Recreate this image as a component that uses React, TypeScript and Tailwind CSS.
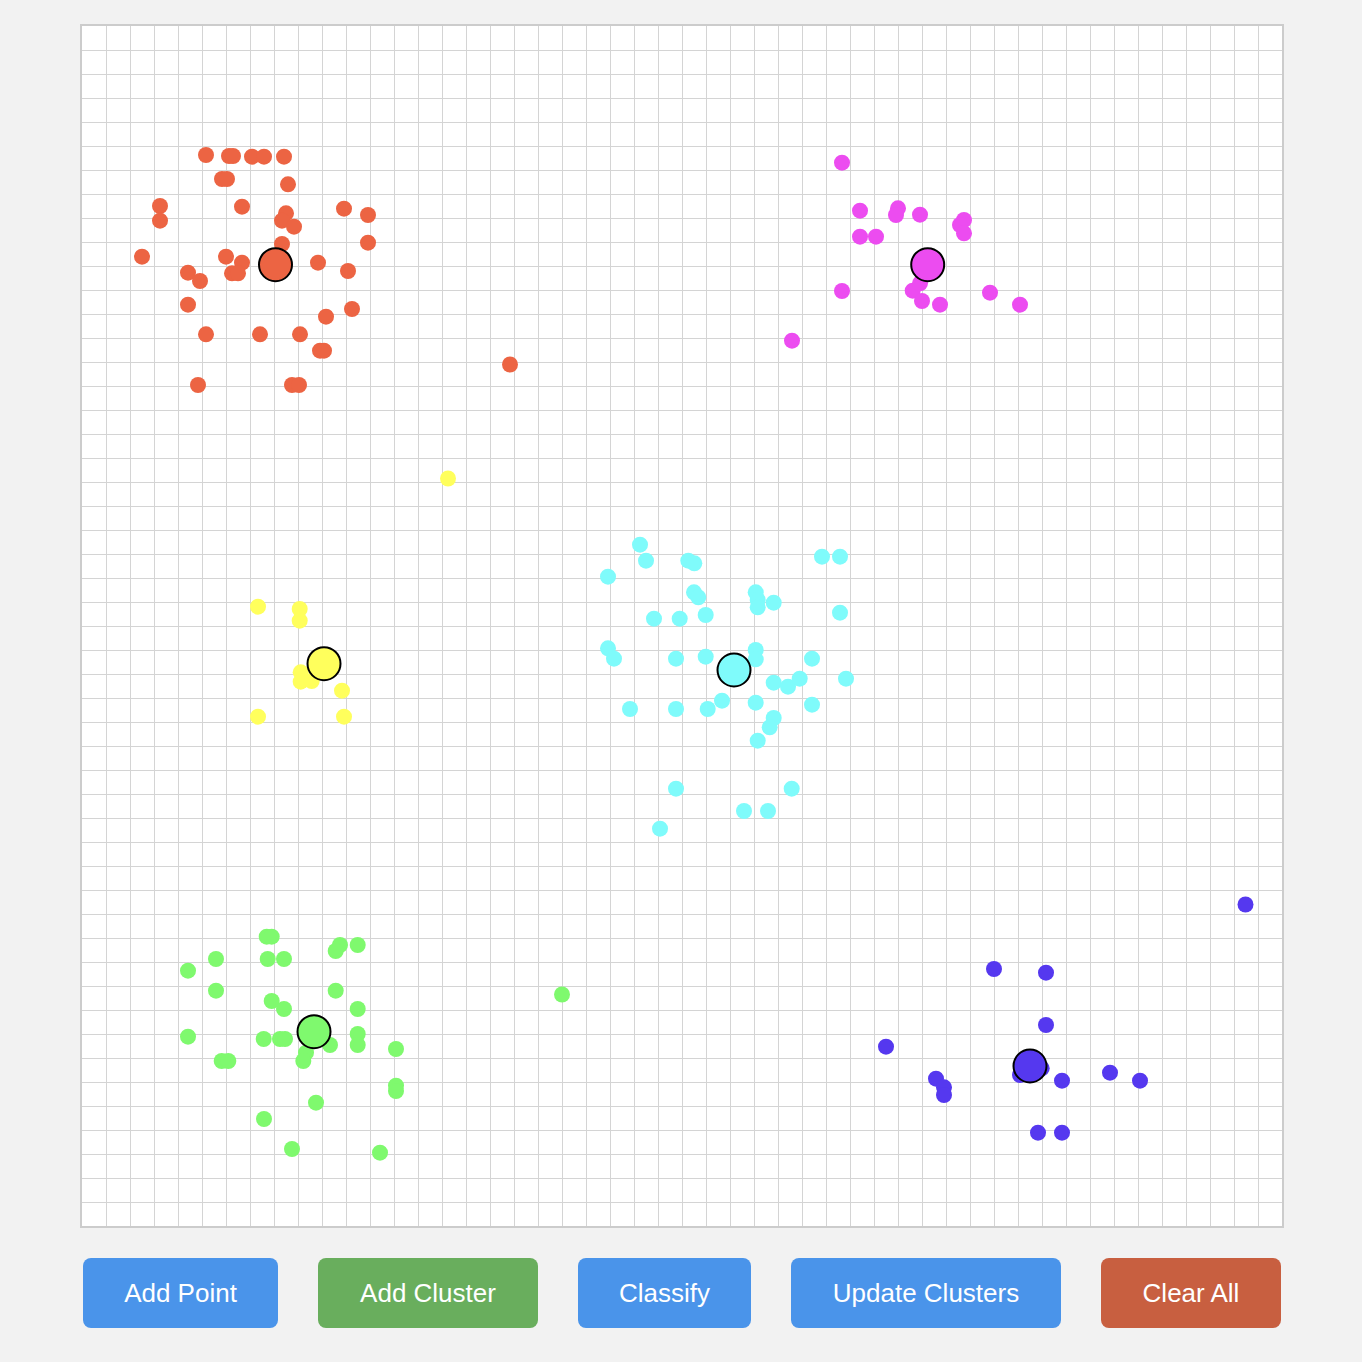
import React from "react";

type P = [number, number];

const orange: P[] = [
  [206,155],[229,156],[233,156],[252,156.7],[264,156.7],[284,156.7],[222,179],[227,179],[288,184.3],
  [160,206],[160,220.7],[242,206.7],[344,208.7],[368,215],[286,213.3],[282,220.7],[294,226.7],[368,242.7],
  [282,244],[142,256.7],[226,256.7],[242,262.7],[232,273.3],[238,273.3],[188,272.7],[200,281],[318,262.7],
  [348,271],[188,304.7],[352,309],[326,316.7],[206,334.3],[260,334.3],[300,334.3],[320,350.7],[324,350.7],
  [198,385],[292,385],[299,385],[510,364.5],
];
const magenta: P[] = [
  [842,162.7],[860,210.7],[898,208.3],[896,215],[920,214.7],[964,220],[960,225],[964,233.3],[860,236.7],
  [876,236.7],[842,291],[912.7,290.7],[920,283.3],[922,301],[940,304.7],[990,292.7],[1020,304.7],[792,340.7],
];
const yellow: P[] = [
  [258,606.7],[299.7,609],[299.7,620.7],[300.7,672.3],[300.7,681.7],[311.7,681],[342,690.7],[258,716.7],
  [344,716.7],[448,478.5],
];
const cyan: P[] = [
  [640,544.7],[646,560.7],[688.3,560.7],[694.3,563.3],[608,576.7],[822,556.7],[840,556.7],[694,592.3],
  [698.3,597.3],[755.7,592.3],[757.7,600],[757.7,607.3],[773.7,602.7],[840,612.7],[654,618.7],[679.7,618.7],
  [705.7,615],[608,648.3],[614,658.7],[676,658.7],[705.7,656.7],[755.7,650],[755.7,659.3],[812,658.7],
  [773.7,682.7],[788,686.7],[799.7,678.7],[846,678.7],[630,709],[676,709],[707.7,709],[722,700.7],
  [755.7,702.7],[812,704.7],[773.7,718],[769.7,727.3],[757.7,740.7],[676,788.7],[791.7,788.7],[744,811],
  [768,811],[660,828.7],
];
const green: P[] = [
  [266.7,936.7],[271.7,936.7],[340,945],[335.7,951],[357.7,945],[216,959],[267.7,959],[284,959],[188,970.7],
  [216,990.7],[335.7,990.7],[271.7,1001],[284,1009],[357.7,1009],[188,1036.7],[263.7,1039],[280,1039],
  [285,1039],[330,1045],[357.7,1034],[357.7,1045],[306,1052.7],[303.3,1061],[221.7,1061],[228.3,1061],
  [396,1049],[396,1085.7],[396,1091],[316,1102.7],[264,1119],[292,1149],[380,1152.7],[562,994.5],
];
const blue: P[] = [
  [994,969],[1046,972.7],[1046,1025],[886,1046.7],[1020,1075],[1041.7,1068.3],[936,1078.7],[944,1087.3],
  [944,1095],[1062,1080.7],[1110,1072.7],[1140,1080.7],[1038,1132.7],[1062,1132.7],[1245.5,904.5],
];

const clusters: { color: string; pts: P[]; c: P }[] = [
  { color: "#ec6443", pts: orange, c: [275.5, 264.7] },
  { color: "#ec4cf0", pts: magenta, c: [927.7, 264.7] },
  { color: "#ffff5c", pts: yellow, c: [324, 663.7] },
  { color: "#7ffbfb", pts: cyan, c: [734, 670] },
  { color: "#7ff96e", pts: green, c: [314, 1031.7] },
  { color: "#5538ef", pts: blue, c: [1030, 1066] },
];

const OX = 82;
const OY = 26;

function Canvas() {
  const lines = [];
  for (let i = 1; i < 50; i++) {
    const v = i * 24 + 0.5;
    lines.push(<line key={"v" + i} x1={v} y1={0} x2={v} y2={1200} stroke="#d4d4d4" strokeWidth={1} />);
    lines.push(<line key={"h" + i} x1={0} y1={v} x2={1200} y2={v} stroke="#d4d4d4" strokeWidth={1} />);
  }
  return (
    <div className="border-2 border-[#cccccc] bg-white w-[1204px] h-[1204px]">
      <svg width={1200} height={1200} viewBox="0 0 1200 1200" className="block">
        {lines}
        {clusters.map((cl, ci) => (
          <g key={ci}>
            {cl.pts.map((p, i) => (
              <circle key={i} cx={p[0] - OX} cy={p[1] - OY} r={8} fill={cl.color} />
            ))}
          </g>
        ))}
        {clusters.map((cl, ci) => (
          <circle key={"c" + ci} cx={cl.c[0] - OX} cy={cl.c[1] - OY} r={16.5} fill={cl.color} stroke="#000" strokeWidth={2} />
        ))}
      </svg>
    </div>
  );
}

export default function App() {
  const font = { fontFamily: '"Liberation Sans", Arial, Helvetica, sans-serif' };
  return (
    <div className="min-h-[1362px] w-full bg-[#f2f2f2] pt-[24px]" style={font}>
      <div className="flex justify-center pl-[2px]">
        <Canvas />
      </div>
      <div className="mt-[30px] flex justify-center gap-[40px] pl-[2px]">
        <button className="h-[70px] w-[195px] rounded-[8px] bg-[#4a94ea] text-[26px] text-white">Add Point</button>
        <button className="h-[70px] w-[220px] rounded-[8px] bg-[#69ae5d] text-[26px] text-white">Add Cluster</button>
        <button className="h-[70px] w-[173px] rounded-[8px] bg-[#4a94ea] text-[26px] text-white">Classify</button>
        <button className="h-[70px] w-[270px] rounded-[8px] bg-[#4a94ea] text-[26px] text-white">Update Clusters</button>
        <button className="h-[70px] w-[180px] rounded-[8px] bg-[#c85f40] text-[26px] text-white">Clear All</button>
      </div>
    </div>
  );
}
